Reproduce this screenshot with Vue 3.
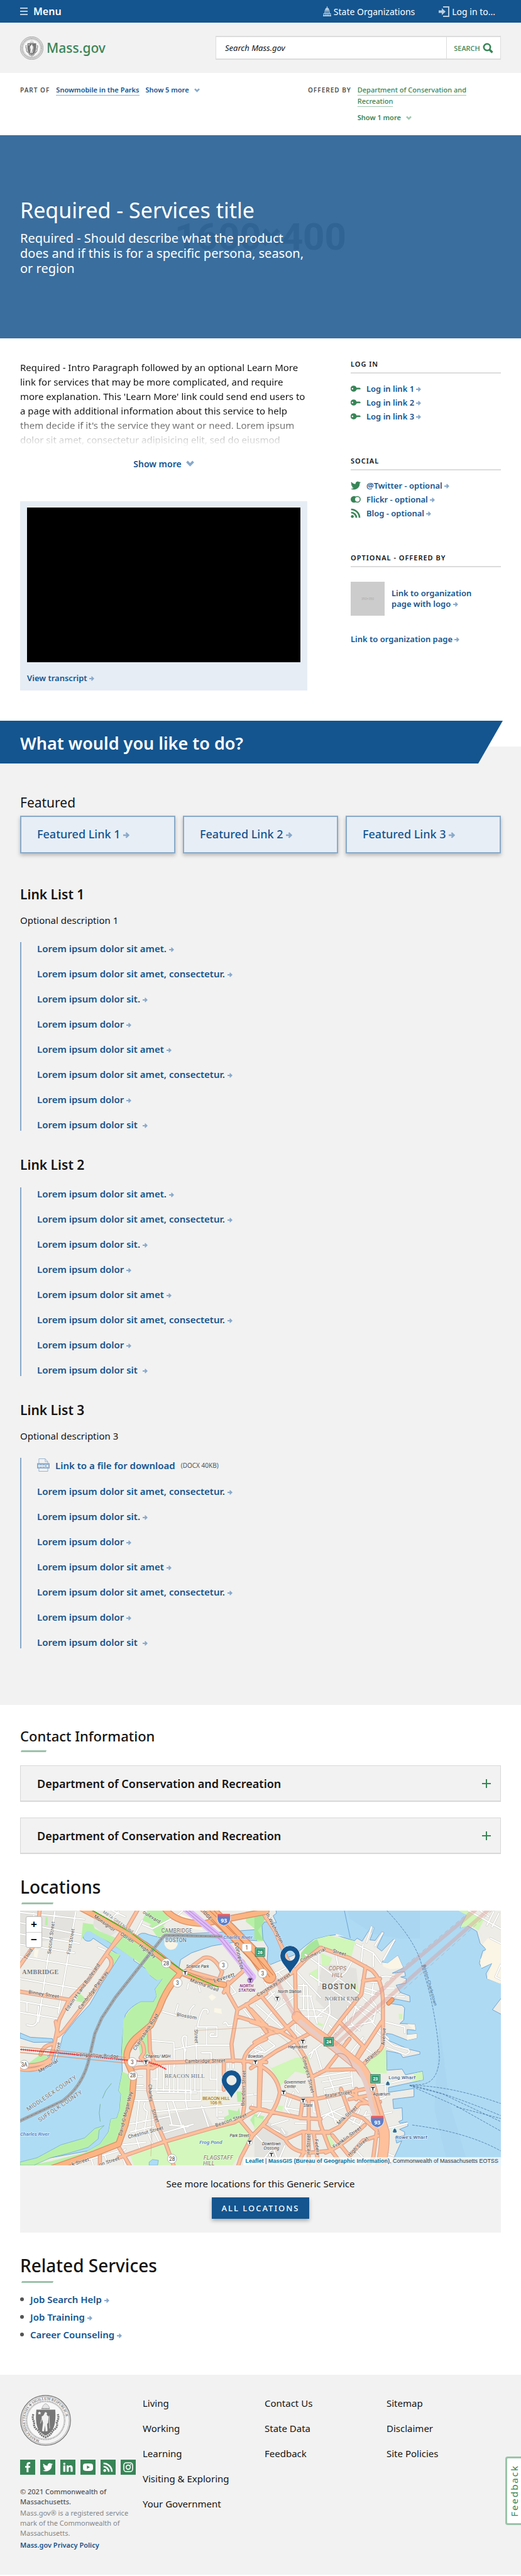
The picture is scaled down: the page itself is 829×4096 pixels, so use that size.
<script setup>
const plain = [
  'Lorem ipsum dolor sit amet.',
  'Lorem ipsum dolor sit amet, consectetur.',
  'Lorem ipsum dolor sit.',
  'Lorem ipsum dolor',
  'Lorem ipsum dolor sit amet',
  'Lorem ipsum dolor sit amet, consectetur.',
  'Lorem ipsum dolor',
  'Lorem ipsum dolor sit\u00a0',
]
const lists = [
  { title: 'Link List 1', text: 'Optional description 1', links: plain },
  { title: 'Link List 2', links: plain },
  { title: 'Link List 3', text: 'Optional description 3', file: true, links: plain.slice(1) },
]
const featured = ['Featured Link 1', 'Featured Link 2', 'Featured Link 3']
const logins = ['Log in link 1', 'Log in link 2', 'Log in link 3']
const socials = [
  { icon: 'twitter', text: '@Twitter - optional' },
  { icon: 'flickr', text: 'Flickr - optional' },
  { icon: 'rss', text: 'Blog - optional' },
]
const footerSocial = ['facebook', 'twitter', 'linkedin', 'youtube', 'rss', 'instagram']
const related = ['Job Search Help', 'Job Training', 'Career Counseling']
const footerNav = [
  ['Living', 'Working', 'Learning', 'Visiting & Exploring', 'Your Government'],
  ['Contact Us', 'State Data', 'Feedback'],
  ['Sitemap', 'Disclaimer', 'Site Policies'],
]

// Map geometry is drawn in a group stretched by KY; labels use the same factor on y only.
const KY = 1.0136
const Y = (v) => Math.round(v * KY)
const turn = (l) => `rotate(${l[3]} ${l[1]} ${Y(l[2])})`

// text, x, y, angle, class
const labels = [
  ['Monsignor', 612, 125, 36, 'st'],
  ['Obrien', 745, 210, 34, 'st'],
  ['Highway', 865, 287, 37, 'st'],
  ['MBTA GREEN LINE', 695, 118, 35, 'gl'],
  ['oulevard', 890, 90, 32, 'st'],
  ['Second Street', 312, 203, -83, 'st'],
  ['First Street', 428, 225, -80, 'st'],
  ['Third', 178, 302, -60, 'st'],
  ['Edwin H Land Boulevard', 495, 495, -55, 'st'],
  ['Cambridge Parkway', 558, 512, -53, 'st'],
  ['Binney Street', 258, 540, 9, 'st'],
  ['Memorial', 290, 955, -30, 'st'],
  ['Drive', 352, 845, -82, 'st'],
  ['Longfellow Bridge', 576, 895, 3, 'st'],
  ['Charlesbank Road', 868, 755, -57, 'st'],
  ['Martha Road', 1202, 485, 20, 'st'],
  ['Leverett', 1325, 445, -17, 'big'],
  ['Connector', 1400, 312, 77, 'big'],
  ['IDGE', 1215, 78, 48, 'st'],
  ['Blossom', 1100, 667, 10, 'st'],
  ['Street', 1148, 775, 88, 'st'],
  ['Cambridge Street', 1210, 927, -1, 'st'],
  ['Bowdoin Street', 1445, 1075, -88, 'st'],
  ['Beacon Street', 1365, 1270, -19, 'st'],
  ['Charles', 878, 1105, 87, 'st'],
  ['Street', 908, 1240, 70, 'st'],
  ['Chestnut Street', 862, 1342, -15, 'st'],
  ['David G Mugar Way', 750, 1225, -76, 'st'],
  ['k Street', 478, 1512, -17, 'st'],
  ['on Street', 648, 1510, -18, 'st'],
  ['MIDDLESEX COUNTY', 312, 1115, -34, 'cty'],
  ['SUFFOLK COUNTY', 362, 1190, -34, 'cty'],
  ['CAMBRIDGE', 1043, 173, 0, 'city'],
  ['BOSTON', 1038, 228, 0, 'city'],
  ['AMBRIDGE', 240, 412, 0, 'serif'],
  ['BEACON HILL', 1090, 1016, 0, 'serif2'],
  ['Charles River', 1403, 208, 0, 'wat'],
  ['Charles River', 206, 1354, 0, 'wat'],
  ['Frog Pond', 1243, 1398, 0, 'wat'],
  ['Science Park', 1165, 378, 0, 'stn'],
  ['Charles/ MGH', 932, 898, 0, 'stn'],
  ['Bowdoin', 1507, 898, 0, 'stn'],
  ['Park Street', 1412, 1360, 0, 'stn'],
  ['NORTH', 1454, 490, 0, 'ns'],
  ['STATION', 1455, 517, 0, 'ns'],
  ['BEACON HILL', 1275, 1143, 0, 'peak'],
  ['106 ft.', 1275, 1171, 0, 'peak'],
  ['FLAGSTAFF', 1288, 1492, 0, 'hill'],
  ['HILL', 1232, 1524, 0, 'hill'],
  ['th Washington', 1610, 150, 63, 'st'],
  ['Commercial', 1850, 310, -27, 'st'],
  ['Street', 1998, 298, 17, 'st'],
  ['Causeway Street', 1618, 483, -33, 'st'],
  ['COPPS', 1990, 392, 0, 'hill'],
  ['HILL', 1990, 433, 0, 'hill'],
  ['BOSTON', 2000, 502, 0, 'boston'],
  ['NORTH END', 2016, 566, 0, 'serif2'],
  ['North Station', 1708, 525, 0, 'stn'],
  ['Haymarket', 1755, 845, 0, 'stn'],
  ['Government', 1738, 1050, 0, 'stn'],
  ['Center', 1710, 1073, 0, 'stn'],
  ['State', 1816, 1185, 0, 'stn'],
  ['Aquarium', 2249, 1120, 0, 'stn'],
  ['Downtown', 1600, 1407, 0, 'stn'],
  ['Crossing', 1600, 1434, 0, 'stn'],
  ['Congress Street', 1808, 1000, 76, 'st'],
  ['State Street', 1996, 1120, -9, 'st'],
  ['Milk Street', 2052, 1240, -42, 'st'],
  ['Franklin Street', 2052, 1368, -36, 'st'],
  ['High Street', 2118, 1422, -43, 'st'],
  ['Federa', 1860, 1420, 83, 'st'],
  ['ire Street', 1828, 1400, -89, 'st'],
  ['Atlantic', 2200, 895, -40, 'st'],
  ['Avenue', 2270, 775, -86, 'st'],
  ['Long Wharf', 2370, 1023, 0, 'whf'],
  ["Rowe's Wharf", 2425, 1369, 0, 'whf'],
  ['Boston-Charlestown', 2525, 480, 74, 'ferry'],
]
const shields = [
  ['28', 981, 350], ['3', 1047, 464], ['3', 1317, 362], ['3', 1548, 408],
  ['3', 780, 924], ['28', 784, 1003], ['28', 1015, 1486], ['3A', 144, 940],
]
const stations = [
  [1092, 405], [861, 924], [1506, 924], [1472, 1390], [1635, 555],
  [1785, 805], [1672, 1100], [1787, 1147], [2198, 1079], [1600, 1462],
]
const exits = [['26', 1533, 286], ['24', 1938, 806], ['23', 2213, 1021]]
const interstates = [[1320, 98], [2224, 1270]]
const pins = [[1365, 1030], [1710, 307]]
</script>

<template>
  <div class="page">
    <svg class="defs" aria-hidden="true">
      <symbol id="arrow" viewBox="0 0 10 10">
        <path d="M0 5H8M4.4 1.2L8.4 5L4.4 8.8" fill="none" stroke="#88a9ca" stroke-width="2.4" />
      </symbol>
      <symbol id="chevron" viewBox="0 0 10 8">
        <path d="M1 1.5L5 5.6L9 1.5" fill="none" stroke="currentColor" stroke-width="3" />
      </symbol>
      <symbol id="key" viewBox="0 0 20 12">
        <path fill="currentColor" fill-rule="evenodd" d="M6 0a6 6 0 0 1 5.500 4H18l2 2-1.500 2-1-1-1.500 1-1.500-1L13 8H11.500A6 6 0 1 1 6 0zM3.500 4.500a1.600 1.600 0 1 0 .1 0z" />
      </symbol>
      <symbol id="twitter" viewBox="0 0 24 24">
        <path fill="currentColor" d="M24 4.600a10 10 0 0 1-2.800.8 5 5 0 0 0 2.100-2.700 10 10 0 0 1-3.100 1.200 4.900 4.900 0 0 0-8.400 4.500A14 14 0 0 1 1.700 3.200a4.900 4.900 0 0 0 1.500 6.500 5 5 0 0 1-2.200-.6 4.900 4.900 0 0 0 3.900 4.900 5 5 0 0 1-2.200.1 4.900 4.900 0 0 0 4.600 3.400A9.900 9.900 0 0 1 0 19.500a14 14 0 0 0 21.500-12.400A10 10 0 0 0 24 4.600z" />
      </symbol>
      <symbol id="flickr" viewBox="0 0 24 20">
        <circle cx="8" cy="10" r="8" fill="currentColor" />
        <circle cx="16" cy="10" r="6.700" fill="#fff" stroke="currentColor" stroke-width="2.400" />
      </symbol>
      <symbol id="rss" viewBox="0 0 24 24">
        <circle cx="4" cy="20" r="3.400" fill="currentColor" />
        <path d="M1 10.500A12.500 12.500 0 0 1 13.500 23M1 3A20 20 0 0 1 21 23" fill="none" stroke="currentColor" stroke-width="4" />
      </symbol>
      <symbol id="facebook" viewBox="0 0 24 24">
        <path fill="currentColor" d="M9.500 24V13H6V9h3.500V5.800C9.500 2 11.500 0 15 0h3.200v4h-2.300c-1.500 0-1.900.7-1.900 2v3h4.200l-.6 4H14v11z" />
      </symbol>
      <symbol id="linkedin" viewBox="0 0 24 24">
        <path fill="currentColor" d="M1 8h5v15H1zM3.500 1a2.700 2.700 0 1 1 0 5.400 2.700 2.700 0 0 1 0-5.400zM9 8h4.700v2.100C14.500 8.600 16.200 7.600 18 7.600c4.200 0 5.500 2.500 5.500 6.700V23h-5v-7.800c0-2-.3-3.400-2.100-3.400s-2.400 1.400-2.400 3.300V23H9z" />
      </symbol>
      <symbol id="youtube" viewBox="0 0 24 24">
        <path fill="currentColor" fill-rule="evenodd" d="M5 3.500Q12 2.500 19 3.500Q24 4 24 9v6q0 5-5 5.500-7 1-14 0-5-.5-5-5.500V9q0-5 5-5.500zM9.500 8v8l7-4z" />
      </symbol>
      <symbol id="instagram" viewBox="0 0 24 24">
        <rect x="1.500" y="1.500" width="21" height="21" rx="6" fill="none" stroke="currentColor" stroke-width="2.400" />
        <circle cx="12" cy="12" r="5" fill="none" stroke="currentColor" stroke-width="2.400" />
        <circle cx="18" cy="6" r="1.500" fill="currentColor" />
      </symbol>
      <symbol id="seal" viewBox="0 0 100 100">
        <circle cx="50" cy="50" r="49" fill="#f4f4f4" stroke="#777" stroke-width="1.600" />
        <circle cx="50" cy="50" r="46.500" fill="none" stroke="#888" stroke-width=".8" />
        <circle cx="50" cy="50" r="38" fill="#f8f8f8" stroke="#8a8a8a" stroke-width="1.400" stroke-dasharray="1 .7" />
        <circle cx="50" cy="50" r="36.500" fill="none" stroke="#999" stroke-width=".7" />
        <path d="M26 38Q23 46 28 54Q25 64 36 70Q40 80 50 83Q60 80 64 70Q75 64 72 54Q77 46 74 38" fill="none" stroke="#777" stroke-width="4" stroke-dasharray="3 1.200" />
        <path d="M32 29H69Q71 56 64 68Q58 77 50 80Q42 77 36 68Q29 56 32 29z" fill="#777" />
        <path d="M43 27Q44 20 50 17Q57 20 58 27z" fill="#e6e6e6" stroke="#999" stroke-width=".8" />
        <path d="M42 27H58" stroke="#777" stroke-width="1.500" stroke-dasharray="2 1" />
        <path d="M38 32l1 2.500h2.600l-2 1.700.7 2.500-2.300-1.500-2.300 1.500.7-2.500-2-1.700H37z" fill="#fff" />
        <path d="M49 34a3 3 0 0 1 3 5l4 4-1 12-2 2 1 14-4 1-1-12-2 12-4-1 2-16-3-12 4-3z" fill="#f1f1f1" />
        <path d="M43 46L40 56M57 41L58 66" stroke="#eee" stroke-width="1" />
      </symbol>
    </svg>

    <div class="topbar">
      <button class="menu" type="button">
        <svg width="12" height="12" viewBox="0 0 12 12" aria-hidden="true"><path d="M0 1H12M0 6H12M0 11H12" stroke="#b9cde0" stroke-width="2" /></svg>
        <span>Menu</span>
      </button>
      <nav class="utility">
        <a href="#orgs">
          <svg width="13" height="16" viewBox="0 0 26 32" aria-hidden="true">
            <path fill="#b9cde0" d="M12 0h2v4q5 2 6 8H6q1-6 6-8zM5 13h16v3H5zM5 17h3v5H5zM10 17h2v5h-2zM14 17h2v5h-2zM18 17h3v5h-3zM1 22h24v2H1zM1 25h3v4H1zM6 25h3v4H6zM11 25h4v4h-4zM17 25h3v4h-3zM22 25h3v4h-3zM0 29h26v3H0z" />
          </svg>
          <span>State Organizations</span>
        </a>
        <a href="#login">
          <svg width="17" height="17" viewBox="0 0 17 17" aria-hidden="true">
            <path d="M7 1H16V16H7" fill="none" stroke="#b9cde0" stroke-width="2" />
            <path d="M0 6.500H5V3L11 8.500L5 14V10.500H0z" fill="#b9cde0" />
          </svg>
          <span>Log in to...</span>
        </a>
      </nav>
    </div>

    <header class="header">
      <a class="logo" href="#home">
        <svg width="37" height="37" viewBox="0 0 100 100" aria-hidden="true">
          <use href="#seal" width="100" height="100" />
          <circle cx="50" cy="50" r="42" fill="none" stroke="#999" stroke-width="5" stroke-dasharray="3 2" />
        </svg>
        <span>Mass.gov</span>
      </a>
      <form class="search" @submit.prevent>
        <input type="text" placeholder="Search Mass.gov" aria-label="Search Mass.gov">
        <button type="submit">SEARCH
          <svg width="17" height="17" viewBox="0 0 17 17" aria-hidden="true"><circle cx="7" cy="7" r="5.200" fill="none" stroke="#388557" stroke-width="2.600" /><path d="M10.500 10.500L15.500 15.500" stroke="#388557" stroke-width="3.400" /></svg>
        </button>
      </form>
    </header>

    <div class="relations">
      <div class="part">
        <span class="tag">PART OF</span>
        <a class="ul" href="#snow">Snowmobile in the Parks</a>
        <button type="button">Show 5 more <svg width="9" height="7"><use href="#chevron" /></svg></button>
      </div>
      <div class="offered">
        <span class="tag">OFFERED BY</span>
        <div>
          <a class="ul" href="#dcr">Department of Conservation and Recreation</a>
          <button type="button">Show 1 more <svg width="9" height="7"><use href="#chevron" /></svg></button>
        </div>
      </div>
    </div>

    <section class="hero">
      <span class="holder" aria-hidden="true">1600×400</span>
      <div class="herotext">
        <h1>Required - Services title</h1>
        <p>Required - Should describe what the product does and if this is for a specific persona, season, or region</p>
      </div>
    </section>

    <main class="intro">
      <div>
        <p class="lead">Required - Intro Paragraph followed by an optional Learn More link for services that may be more complicated, and require more explanation. This 'Learn More' link could send end users to a page with additional information about this service to help them decide if it's the service they want or need. Lorem ipsum dolor sit amet, consectetur adipisicing elit, sed do eiusmod</p>
        <button class="more" type="button">Show more <svg width="13" height="10"><use href="#chevron" /></svg></button>
        <div class="videocard">
          <div class="video"></div>
          <a class="lnk" href="#transcript">View transcript <svg class="arr"><use href="#arrow" /></svg></a>
        </div>
      </div>
      <aside>
        <section class="side">
          <h2>LOG IN</h2>
          <ul>
            <li v-for="l in logins" :key="l"><svg class="ic key"><use href="#key" /></svg><a class="lnk" href="#l">{{ l }} <svg class="arr"><use href="#arrow" /></svg></a></li>
          </ul>
        </section>
        <section class="side">
          <h2>SOCIAL</h2>
          <ul>
            <li v-for="s in socials" :key="s.icon"><svg class="ic"><use :href="'#' + s.icon" /></svg><a class="lnk" href="#s">{{ s.text }} <svg class="arr"><use href="#arrow" /></svg></a></li>
          </ul>
        </section>
        <section class="side">
          <h2>OPTIONAL - OFFERED BY</h2>
          <div class="org">
            <span class="orglogo">350×350</span>
            <a class="lnk" href="#o">Link to organization page with logo <svg class="arr"><use href="#arrow" /></svg></a>
          </div>
          <a class="lnk orgpage" href="#p">Link to organization page <svg class="arr"><use href="#arrow" /></svg></a>
        </section>
      </aside>
    </main>

    <section class="actions">
      <h2 class="banner">What would you like to do?</h2>
      <div class="body">
        <h3 class="light">Featured</h3>
        <div class="cards">
          <a v-for="f in featured" :key="f" href="#f">{{ f }} <svg class="arr wide"><use href="#arrow" /></svg></a>
        </div>
        <div v-for="g in lists" :key="g.title" class="group">
          <h3>{{ g.title }}</h3>
          <p v-if="g.text">{{ g.text }}</p>
          <ul>
            <li v-if="g.file" class="file">
              <svg width="20" height="21" viewBox="0 0 24 25" aria-hidden="true">
                <path d="M3.500 .5H15.500L20.500 6V24.500H3.500zM15.500 .5V6H20.500" fill="#f2f2f2" stroke="#88a9ca" />
                <rect y="9" width="24" height="10" fill="#88a9ca" />
                <text x="12" y="17" text-anchor="middle" class="docx">DOCX</text>
              </svg>
              <a href="#d">Link to a file for download</a> <small>(DOCX 40KB)</small>
            </li>
            <li v-for="(t, i) in g.links" :key="i"><a href="#i">{{ t }} <svg class="arr"><use href="#arrow" /></svg></a></li>
          </ul>
        </div>
      </div>
    </section>

    <section class="lower">
      <h2 class="h22">Contact Information</h2>
      <div class="bar short"></div>
      <button v-for="n in 2" :key="n" class="accordion" type="button">
        <span>Department of Conservation and Recreation</span>
        <svg width="14" height="14" viewBox="0 0 14 14" aria-hidden="true"><path d="M7 0V14M0 7H14" stroke="#388557" stroke-width="2" /></svg>
      </button>

      <h2 class="h26">Locations</h2>
      <div class="bar"></div>
      <div class="mapwrap">
        <svg class="map" viewBox="120 45 2832 1500" preserveAspectRatio="xMidYMid slice" role="img" aria-label="Map of locations in Boston">
          <g :transform="`scale(1 ${KY})`">
            <rect x="120" y="40" width="2832" height="1490" fill="#edece6" />
            <g fill="#e3e2de">
              <path d="M120 44H440L420 200L120 240z" /><path d="M560 60L720 150L640 200L550 130z" />
              <path d="M1900 350L2100 380L2120 560L2000 700L1860 560z" /><path d="M1500 1230L1700 1330L1650 1524H1500z" />
              <path d="M900 1240L1200 1190L1260 1300L980 1370z" />
            </g>
            <g fill="#aedcf5" stroke="#5a96cc" stroke-width="3">
              <path d="M490 185A32 32 0 0 1 550 165L640 225L790 320V335L895 405L885 420L925 450L955 410L960 440L915 500L925 540L905 575L830 575Q770 600 740 650Q728 700 718 860L722 980L700 1090L714 1110L706 1200L690 1250L655 1255L640 1330L590 1400L520 1440L400 1462L300 1480L100 1540V975L200 945L330 925L350 860L370 775L450 675L530 590L600 470L650 395L708 305L640 265L550 205A32 32 0 0 1 490 185z" />
              <path d="M120 755L180 780L310 788L330 870L320 925L160 970L220 940L320 860V808L200 810L120 785z" />
              <path d="M805 200Q830 160 880 185L960 205L985 170L1080 180L1300 170L1510 155L1515 220L1460 215L1250 250L1130 290L1065 330L1055 380L985 320L870 230z" />
            </g>
            <path d="M970 205L1050 235Q1040 275 1005 272Q980 268 970 240z" fill="#f8f4e4" />
            <g fill="#b9f0a8">
              <path d="M490 115L550 125L560 150L600 170L690 205L740 165L860 250L1040 400L1010 470L925 545L915 500L960 440L925 450L885 420L850 370L790 325L640 225L550 175Q510 140 490 200L480 220z" />
              <path d="M710 300L650 390Q665 340 630 300L650 280z" />
              <path d="M1040 400L980 480L930 620L890 710L790 790L745 870L718 900L728 680Q770 600 830 575H905L925 540z" />
              <path d="M722 980L790 1010L780 1120L740 1290L700 1390L560 1450L330 1524H180L300 1500L500 1450L590 1400L640 1330L655 1255L690 1250L706 1200L714 1110L700 1090z" />
              <path d="M120 1505L220 1480L360 1405L500 1365L560 1310L615 1293L585 1320L580 1370L520 1420L400 1455L300 1480L200 1524H120z" stroke="#5a96cc" stroke-width="2" />
              <path d="M870 44H970L1000 90L950 150L840 100z" /><path d="M880 130L930 110L1010 170L930 200z" />
              <path d="M170 930L240 880L290 895L280 910L200 935z" /><path d="M270 80h12v50h-15z" />
              <path d="M465 520L510 560L490 580L450 570z" /><path d="M810 780L870 740L880 880L830 900z" />
              <path d="M1310 1250L1350 1230L1345 1200L1400 1210L1410 1190L1420 1240L1340 1270z" />
              <path d="M1475 1260L1500 1225L1560 1240L1515 1325z" /><path d="M1395 1095h30v60h-25z" />
              <path d="M1450 50L1500 44H1560V220L1515 225L1510 155L1450 110z" /><path d="M655 1290a30 30 0 0 1 60 0z" opacity=".5" />
            </g>
            <g fill="#d4f7bd">
              <path d="M770 1470L960 1400L1430 1265L1490 1350L1370 1524H790z" />
            </g>
            <path d="M880 1524V1505L900 1490L935 1495L930 1524z" fill="#aedcf5" stroke="#5a96cc" stroke-width="2" />
            <g stroke="#6fae7c" stroke-width="3" fill="none"><path d="M658 1048L625 1090L605 1135M592 1168L586 1220L592 1270" /></g>
            <g fill="#fbf7e9"><path d="M1230 545L1250 530L1275 548L1250 570z" /><path d="M1265 610L1305 615L1308 645L1262 635z" /><path d="M205 270L230 270L220 320L200 310z" /><path d="M1060 60L1150 100L1200 160L1130 150L1050 90z" /></g>

            <g transform="translate(1500)">
              <path fill="#aedaf4" stroke="#5a96cc" stroke-width="3" d="M125 30L130 60L110 75L130 115L60 110L45 130L50 210L80 260L75 340L95 358L140 340L240 300L300 250L350 212L440 190L480 185L520 200L590 220L605 205L635 222L690 135L708 145L680 215L712 218L750 165L765 172L722 258L750 280L820 210L830 220L752 345L785 350L845 305L878 378L812 408L885 400L890 425L862 430L895 440L893 465L835 478L860 520L915 540L917 575L815 555L775 580L870 595L885 610L880 680L857 700L945 705L950 740L900 735L900 765L958 760L957 785L900 797L810 762L778 758L780 795L910 850L975 865L975 878L875 898L860 875L778 858L780 972L870 965L890 998L990 978L995 1028L790 1072L790 1100L940 1078L940 1125L815 1140L820 1195L870 1190L873 1260L850 1270L858 1280L900 1272L905 1295L855 1315L885 1330V1350L830 1360L838 1395L868 1382L795 1540H1460V650L1402 620L1460 545V470L1370 440L1365 410L1400 350L1340 380L1325 350L1345 280L1365 270L1330 235L1310 165L1250 130L1212 145L1250 70L1200 30z" />
              <path d="M550 44H975V205L860 208L700 180L560 90zM1090 700L1150 1160L1260 1524H1140L1060 1200z" fill="#a6d4ef" opacity=".6" />
              <g fill="#fbf5e6">
                <path d="M752 345L785 350L845 305L878 378L800 385L760 370z" /><path d="M902 703L945 705L950 740L930 730zM900 765L958 760L957 785L900 797z" />
                <path d="M1390 200L1451 230V470L1370 440L1400 350L1335 378L1330 330L1365 270L1345 240L1370 210z" /><path d="M480 180L530 195L480 190z" />
              </g>
              <g fill="#d0f6b8">
                <path d="M350 212L440 190L595 222L570 320L480 290L385 260z" /><path d="M390 290L460 320L440 360L400 370z" /><path d="M320 410L375 380L370 460z" />
                <path d="M775 840L780 990L690 985L655 950L690 890z" /><path d="M75 930L100 960L240 900L320 890L330 1000L240 980L150 1065L130 1010z" />
                <path d="M940 990L990 980L994 1028L930 1035z" /><path d="M1200 44H1260L1350 100L1320 160L1270 130L1212 145L1250 70z" />
                <path d="M400 1300L440 1345L480 1410L430 1420z" /><path d="M0 1240L60 1260L0 1330z" /><path d="M850 645h22v30h-20z" /><path d="M560 470l30-10 30 60-20 10z" /><path d="M135 1175l35 5-5 30-30-10z" /><path d="M370 690l35 15-5 15-32-15z" />
              </g>
              <path d="M275 290Q330 220 370 212L385 250L270 350z" fill="#a5e69b" />
              <path d="M0 44H40L65 80L45 130L20 160L55 220L0 210z" fill="#a5e69b" />
              <path d="M530 44L565 205" stroke="#5a96cc" fill="none" stroke-width="3" />
            </g>

            <g fill="none" stroke-linejoin="round" stroke-linecap="round">
              <g v-for="p in [['#c9c8c4', 12], ['#ffffff', 8]]" :key="p[1]" :stroke="p[0]" :stroke-width="p[1]">
                <path d="M120 55L500 95M120 115L480 185M120 180L470 235M120 240L440 290M120 312L540 380M120 440L460 498M120 570L355 610M120 635L340 672M325 50L228 690M448 50L345 640M228 600L220 690Q205 725 160 708M160 580V630M200 60V230M660 44L740 80M700 50L670 80M840 100L790 195M840 125L900 150L1015 90M580 258L620 275M1080 44L1050 70" />
                <path d="M960 632L1080 665M1050 590L1035 640M1145 595Q1115 620 1115 650M1225 640Q1235 612 1200 618Q1180 640 1165 720H1280V775H1240Q1235 755 1260 760M1155 720L1160 920M895 800L1025 810L1030 950M1030 850L1155 827L1358 827M1218 720V820M1090 920V860L1075 800Q1075 765 1100 775L1095 860M1190 870H1245V915M1105 500Q1115 450 1110 480M1170 480L1180 515M1320 700Q1330 680 1345 715L1370 710M1360 480L1390 520L1350 540M1430 610L1495 690M1480 830L1530 890M1510 810L1560 860M1475 870L1540 810" />
                <path d="M790 1082L1315 1094M925 1100L1160 1103M780 1147L1185 1147M895 1213L1420 1170M760 1285L1000 1240M770 1330L905 1298M800 1355L830 1440M960 1337L1140 1285M1000 1290L1110 1300M725 1405L860 1390M740 1430L700 1470M928 930L925 1090M965 960V1090M985 930V1060M1000 930V1100M1025 940V1100M1050 1000V1100M1095 940V1140M1125 1020V1140M1150 940V1090M1185 940V1140M1240 940V1025H1280M1280 940V1240M1345 930V960M1375 930V960M820 1150L800 1330M855 1160Q840 1200 870 1210L850 1330M985 1160L1015 1290M1020 1150L1070 1290M1095 1150L1105 1200M1190 1180L1230 1300M870 1330L900 1400M910 1330L940 1390M1080 1290L1100 1345M800 1060H845M810 1008H840M900 1022H930M1290 1215H1310M1290 1250H1320M1490 1170V1200M1430 1120L1515 1110M420 1520L700 1440M620 1470L640 1524M540 1490L550 1524M720 1460L740 1524" />
              </g>
              <g v-for="p in [['#c9c8c4', 12], ['#ffffff', 8]]" :key="'e' + p[1]" transform="translate(1500)" :stroke="p[0]" :stroke-width="p[1]">
                <path d="M380 280V480M300 300L620 530M330 420L540 560M250 400L390 550M260 480H310L320 700M290 470V620M330 540L370 700M265 540H340M265 620H420M270 660H400M440 540L445 640L395 760M360 670L445 590M370 620L440 650M540 560L700 690M600 240L700 290L745 350M640 460H740M640 490L740 520M650 520L720 540M640 550L755 650M700 470L690 560L720 600L700 690L550 720M700 290V370M640 240L630 340M580 330L540 400L460 470M480 300L500 400M600 600L570 700L620 740M550 600L540 690M620 600L710 650M720 750L820 830L905 850Q925 870 890 880L780 840M760 690L885 720V755M760 540L885 545M760 495H825M745 430Q790 420 825 435M690 140L660 230M755 175L710 250M825 215L760 330M620 740L580 710M640 780L560 880M440 650L520 700M440 710L490 760M650 800L590 900M620 820L690 870M690 690L790 790" />
                <path d="M60 460L140 580L60 690M10 590L180 740M100 640L240 540M140 400L230 500M80 350L130 420M120 520L60 570M170 560L240 640M120 410L200 370M0 850L60 870L120 830L70 790L40 760M0 880L50 860M60 800L20 830M240 700V740L300 790M320 880L420 800M350 850L330 900M360 850L400 980M370 980H440M380 1010L560 980M400 1040L570 1010M410 1080L580 1045M440 1010L470 1090M570 960L580 1070M410 1090L480 1280M390 1240L540 1180M390 1260L460 1210L500 1230L620 1290M430 1230L510 1270L540 1240M350 1150V1215H390M200 1110L180 1190L230 1250M230 1100L200 1180M180 1190L270 1205M260 1100L230 1060M770 1060V1130L720 1145M700 1060L780 1050L940 1015M780 1310L900 1280M740 1230L810 1215M620 1200L580 1280M660 1210L620 1290M600 1250L690 1270M570 1250L680 1230M60 1290L150 1330M100 1290L200 1260M160 1310L180 1340M240 1280H310V1320M0 1340L60 1400M140 1390L60 1480M110 1420L140 1500M180 1410L130 1524M590 1430L640 1480M770 1450L820 1470M30 1150H110M20 1240L40 1210M0 1110H20" />
                <path d="M1260 44L1451 150M1330 44L1380 80M1370 130L1410 50M1400 140L1440 60M1390 205L1451 235M1451 360L1420 430L1451 445" />
              </g>
            </g>

            <g fill="none" stroke-linejoin="round" stroke-linecap="round">
              <g v-for="p in [['#dc9f8c', 24], ['#fdc09a', 15]]" :key="p[1]" :stroke="p[0]" :stroke-width="p[1]">
                <path d="M810 44L740 165L640 280L520 450L405 570L350 680L320 830L300 900Q260 950 100 945M720 165L625 305M625 300Q675 330 650 375L520 560L375 745L345 770L330 690M100 512L410 562M235 44L230 90M100 390L210 235M240 880Q260 820 320 820M120 965Q220 985 300 920M1060 415Q980 500 940 610M880 740L885 860L910 930M745 920Q740 880 800 800Q850 790 850 870L830 900L890 935M875 930V1090L930 1290L975 1390L1030 1540M860 930L1075 925L1380 915L1570 925M700 1480L960 1390L1240 1310L1380 1275L1530 1195L1570 1205M690 1400L775 1540M590 1455V1540M1320 480L1400 620L1365 820L1375 920M1400 620L1570 525M1400 660L1570 710M1450 590L1570 750M1320 925V1085M1440 930V1180L1430 1250M1345 520V460M1410 1255L1490 1350L1570 1270M1435 930Q1440 840 1570 790M1530 930L1525 1190M1490 1350L1420 1480L1400 1540M1095 395L1200 320Q1260 300 1310 400L1290 450M1110 395L1290 445M1320 520L1350 470L1430 400Q1450 360 1430 340M800 960Q840 950 900 960L950 930M1550 40L1570 90" />
                <g transform="translate(1500)">
                  <path d="M30 30L120 160L190 320L240 400L245 690M-20 570L230 400L300 330L390 260L560 320L690 390Q750 440 757 560V820Q750 860 680 900L610 970M655 370L630 530L500 690L440 770M640 452L740 440M-20 690L150 745L240 800L300 900L340 1010L360 1140L390 1290L440 1420L530 1540M-20 620L100 745M0 810L90 760L170 740L245 680M40 540L240 780M-20 960L130 860L340 750M40 930L30 1200M-20 925Q130 970 150 1100Q130 1220 -20 1360M150 1100L270 1140L380 1135L680 1075M390 1330H440L500 1300L620 1165L740 1155M420 1450Q520 1410 650 1290M560 1470L640 1380L770 1340M340 1010L420 970L620 965M420 970L490 880L560 790M500 690L640 830L600 900M750 690L590 930M-20 1190L280 1250L390 1255M50 1290L180 1370Q220 1450 330 1450L440 1440M320 1140V1540M285 1140L270 1250M190 1370L280 1330L440 1335M250 620L340 750M600 960L690 1080M510 1080L560 1220L640 1250L720 1320M560 1100L700 1180M600 1080V1140M290 1330V1450L240 1540M350 1340L380 1540M560 1140L690 1115M720 1330L700 1480L660 1540M460 1350L560 1470M150 745Q110 760 90 745" />
                </g>
              </g>
              <g v-for="p in [['#dc9068', 38], ['#fbb583', 28]]" :key="'w' + p[1]" :stroke="p[0]" :stroke-width="p[1]">
                <path d="M480 30L740 165L880 260L1060 400L1200 455L1320 475M1055 420Q980 500 940 610L890 710L800 785Q735 850 750 920L790 1010L780 1120L740 1290L700 1400L560 1455L310 1540M970 30Q1040 120 1200 120L1570 50" />
              </g>
              <g v-for="p in [['#dc9068', 78], ['#fbb583', 66]]" :key="'i' + p[1]" :stroke="p[0]" :stroke-width="p[1]"><path d="M1210 20L1350 150L1500 300L1590 430" /></g>
              <path d="M1210 20L1350 150L1500 300L1590 430M1190 30L1570 430M1240 20L1610 420" stroke="#d87f4e" stroke-width="4" />
              <g transform="translate(1500)">
                <path d="M250 660L340 740L470 830L620 950Q690 1030 710 1160L765 1330Q770 1430 740 1540" stroke="#dc9f8c" stroke-width="62" />
                <path d="M250 660L340 740L470 830L620 950Q690 1030 710 1160L765 1330Q770 1430 740 1540" stroke="#fdc09a" stroke-width="54" />
                <path d="M270 690L340 745L470 845L610 960Q665 1040 690 1180L730 1300" stroke="#e8cbc4" stroke-width="26" />
                <path d="M480 880Q540 850 580 960M700 1100L740 1230" stroke="#dc9f8c" stroke-width="5" />
                <path d="M440 810L830 430L1300 44M480 820L880 470L1390 30" stroke="#dd9c95" stroke-width="22" opacity=".42" />
                <path d="M440 795L820 420L1290 34M500 830L900 485L1410 34" stroke="#b9a29c" stroke-width="3" stroke-dasharray="22 20" opacity=".8" />
                <path d="M790 583L812 562" stroke="#dc7f4c" stroke-width="26" /><path d="M790 583L812 562" stroke="#f9a36c" stroke-width="18" />
                <path d="M130 450L230 640" stroke="#e2a79d" stroke-width="26" opacity=".5" />
              </g>
              <path d="M1090 30L1310 210L1490 430" stroke="#e0bbfb" stroke-width="40" />
              <path d="M1090 40L1300 215L1480 430M1110 40L1310 200L1490 420" stroke="#b58fd0" stroke-width="4" stroke-dasharray="6 3" />
              <path d="M110 1270L370 1150Q480 1070 520 930L560 760L600 670L680 550L960 200L975 188L1310 195" stroke="#8d9296" stroke-width="18" stroke-linecap="butt" />
              <path d="M110 1270L370 1150Q480 1070 520 930L560 760L600 670L680 550L960 200L975 188L1310 195" stroke="#adb3b7" stroke-width="13" stroke-linecap="butt" />
              <path d="M110 1270L370 1150Q480 1070 520 930L560 760L600 670L680 550L960 200L975 188L1310 195" stroke="#555" stroke-width="3" stroke-dasharray="12 6 3 6" />
              <path d="M540 40L760 165L980 325L1100 410L1290 490" stroke="#2cae10" stroke-width="4" /><path d="M540 40L760 165L980 325L1100 410L1290 490" stroke="#2cae10" stroke-width="9" stroke-dasharray="2 9" stroke-linecap="butt" />
              <path d="M115 850L420 878L740 912L860 922L930 940L980 966" stroke="#ee2020" stroke-width="4" /><path d="M115 850L420 878L740 912L860 922L930 940L980 966" stroke="#ee2020" stroke-width="12" stroke-dasharray="3 9" stroke-linecap="butt" />
              <path d="M115 835L740 897M115 868L740 930" stroke="#dc9068" stroke-width="5" opacity=".8" />
              <path d="M890 1470Q900 1300 890 1200M1170 740L1560 720M1560 720Q1740 800 1830 1000" stroke="#d39b77" stroke-width="2" />
              <g transform="translate(1500)" stroke="#4674a3" stroke-width="3" stroke-dasharray="14 6" stroke-linecap="butt">
                <path d="M780 44Q960 230 990 380Q1070 620 1090 900Q1080 1060 960 1055L915 1060M915 1060Q1150 1060 1451 1165M915 1060Q1100 1090 1451 1235M915 1060L1110 1110L1451 1270M915 1060L1190 1180L1451 1325M1190 1185L1451 1252M930 1290Q1250 1330 1451 1440" />
              </g>
            </g>
          </g>

          <g class="labels">
            <text v-for="(l, i) in labels" :key="i" :x="l[1]" :y="Y(l[2])" :class="l[4]" :transform="turn(l)" text-anchor="middle">{{ l[0] }}</text>
          </g>
          <g v-for="(s, i) in shields" :key="'s' + i">
            <circle :cx="s[1]" :cy="Y(s[2])" r="27" fill="#fff" stroke="#aaa" stroke-width="3" />
            <text :x="s[1]" :y="Y(s[2]) + 11" class="num" text-anchor="middle">{{ s[0] }}</text>
          </g>
          <rect x="1427" y="240" width="56" height="46" rx="10" fill="#fff" stroke="#bbb" stroke-width="3" />
          <text x="1455" y="275" class="num" text-anchor="middle">1</text>
          <g v-for="(s, i) in stations" :key="'t' + i">
            <circle :cx="s[0]" :cy="Y(s[1])" r="16" fill="#fff" stroke="#888" stroke-width="2" />
            <path :d="`M${s[0] - 10} ${Y(s[1]) - 7}h20M${s[0]} ${Y(s[1]) - 7}v18`" stroke="#111" stroke-width="5" />
          </g>
          <circle cx="1476" cy="455" r="17" fill="#c79be6" stroke="#8a5ca8" stroke-width="2" />
          <path d="M1466 448h20M1476 448v18" stroke="#222" stroke-width="5" />
          <g v-for="e in exits" :key="e[0]">
            <rect :x="e[1] - 28" :y="Y(e[2]) - 25" width="56" height="50" fill="#2f9a70" stroke="#1f7553" stroke-width="3" />
            <rect :x="e[1] - 24" :y="Y(e[2]) - 21" width="48" height="42" fill="none" stroke="#cfe9de" stroke-width="2" />
            <text :x="e[1]" :y="Y(e[2]) + 9" class="exit" text-anchor="middle">{{ e[0] }}</text>
          </g>
          <g v-for="(e, i) in interstates" :key="'n' + i" :transform="`translate(${e[0]} ${Y(e[1])})`">
            <path d="M-36 -33H36Q46 0 28 22Q14 32 0 36Q-14 32 -28 22Q-46 0 -36 -33z" fill="#5a80cc" stroke="#fff" stroke-width="3" />
            <path d="M-36 -34H36L38 -19H-38z" fill="#ee5a5a" />
            <text x="0" y="17" class="exit i" text-anchor="middle">93</text>
          </g>
          <g v-for="f in [[2286, 1048], [2327, 1322]]" :key="f[0]" :transform="`translate(${f[0]} ${Y(f[1])})`">
            <circle r="21" fill="#dff3f0" /><path d="M-12 2H12L9 11H-9zM-8 -6H8V1H-8zM-3 -12H3V-6H-3z" fill="#2f5b82" />
          </g>
          <g v-for="p in pins" :key="p[0]" :transform="`translate(${p[0]} ${Y(p[1])})`">
            <path fill="#14558f" fill-rule="evenodd" stroke="#fff" stroke-width="3" d="M0 108C-12 72 -59 42 -59 0A59 60 0 0 1 59 0C59 42 12 72 0 108zM0 -28A28 28 0 1 0 1 -28z" />
          </g>
        </svg>
        <div class="zoom"><button type="button" aria-label="Zoom in">+</button><button type="button" aria-label="Zoom out">−</button></div>
        <div class="credit"><a href="#leaflet">Leaflet</a> | <a href="#massgis">MassGIS (Bureau of Geographic Information)</a>, Commonwealth of Massachusetts EOTSS</div>
      </div>
      <div class="maplinks">
        <p>See more locations for this Generic Service</p>
        <a href="#all">ALL LOCATIONS</a>
      </div>

      <h2 class="h26">Related Services</h2>
      <div class="bar"></div>
      <ul class="related">
        <li v-for="r in related" :key="r"><a class="lnk" href="#r">{{ r }} <svg class="arr"><use href="#arrow" /></svg></a></li>
      </ul>
    </section>

    <footer class="footer">
      <div class="brand">
        <svg class="bigseal" viewBox="0 0 100 100" role="img" aria-label="Seal of the Commonwealth">
          <use href="#seal" width="100" height="100" />
          <path id="ring" d="M50 90.400A40.400 40.400 0 1 1 50.100 90.400" fill="none" />
          <text class="ringtext"><textPath href="#ring" startOffset="12">MASSACHUSETTENSIS ✢ SIGILLUM REIPUBLICÆ</textPath></text>
        </svg>
        <div class="icons"><a v-for="s in footerSocial" :key="s" href="#x" :aria-label="s"><svg width="16" height="16"><use :href="'#' + s" /></svg></a></div>
        <p class="copy">© 2021 Commonwealth of Massachusetts.</p>
        <p class="mark">Mass.gov® is a registered service mark of the Commonwealth of Massachusetts.</p>
        <a class="privacy" href="#privacy">Mass.gov Privacy Policy</a>
      </div>
      <ul v-for="(c, i) in footerNav" :key="i">
        <li v-for="n in c" :key="n"><a href="#n">{{ n }}</a></li>
      </ul>
      <button class="feedback" type="button">Feedback</button>
    </footer>
  </div>
</template>

<style>
body { margin: 0; }
</style>

<style scoped>
.page { font-family: "Noto Sans", "Open Sans", sans-serif; color: #141414; font-size: 15px; background: #fff; }
.page *, .page *::before { box-sizing: border-box; }
h1, h2, h3, p, ul { margin: 0; padding: 0; }
ul { list-style: none; }
a { text-decoration: none; color: inherit; }
button { font: inherit; color: inherit; background: none; border: 0; padding: 0; cursor: pointer; }
.defs { position: absolute; width: 0; height: 0; }
.ringtext { font: 700 7px "Liberation Serif", serif; fill: #777; }
.arr { width: 8px; height: 8px; }
.arr.wide { width: 10px; height: 10px; }

.topbar { height: 36px; padding: 0 41px 0 32px; background: #14558f; color: #fff; display: flex; align-items: center; justify-content: space-between; }
.menu { display: flex; align-items: center; gap: 9px; font-size: 16px; font-weight: 600; }
.utility { display: flex; gap: 38px; font-size: 14px; }
.utility a { display: flex; align-items: center; gap: 4px; }

.header { height: 80px; padding: 0 32px; background: #f2f2f2; display: flex; align-items: center; justify-content: space-between; }
.logo { display: flex; align-items: center; gap: 5px; font-size: 21px; font-weight: 500; color: #388557; }
.search { width: 454px; height: 38px; display: flex; border: 2px solid #dcdcdc; border-width: 2px 1px; background: #fff; }
.search input { flex: 1; min-width: 0; border: 0; padding: 0 14px; font: italic 13px "Noto Sans", sans-serif; outline: 0; background: none; }
.search input::placeholder { color: #141414; opacity: 1; }
.search button { width: 86px; border-left: 1px solid #dcdcdc; color: #388557; font-size: 11px; font-weight: 500; display: flex; align-items: center; justify-content: center; gap: 4px; }

.relations { height: 99px; padding: 18px 32px 0; display: flex; justify-content: space-between; font-size: 11px; line-height: 18px; }
.part { display: flex; gap: 10px; color: #14558f; height: 18px; }
.tag { color: #535353; font-size: 10px; font-weight: 600; letter-spacing: 1px; white-space: nowrap; }
.part .ul { border-bottom: 1px solid #8fb0d0; line-height: 16px; height: 17px; font-weight: 600; margin-top: 1px; }
.part button, .offered button { font-weight: 600; display: flex; align-items: center; gap: 8px; color: inherit; }
.part svg { color: #88a9ca; }
.offered { width: 307px; display: flex; gap: 10px; color: #388557; }
.offered .ul { text-decoration: underline; text-decoration-color: #9fc8b0; text-underline-offset: 4px; font-weight: 500; }
.offered button { margin-top: 8px; }
.offered svg { color: #9fc8b0; }

.hero { height: 323px; background: #3a6e9e; position: relative; display: flex; align-items: center; justify-content: center; }
.holder { font: 700 60px "Roboto", sans-serif; color: #306494; }
.herotext { position: absolute; left: 32px; top: 94px; width: 462px; color: #fff; }
.herotext h1 { font-size: 34px; font-weight: 400; line-height: 50px; }
.herotext p { font-size: 20px; line-height: 24px; margin-top: 8px; }

.intro { padding: 0 32px 48px; display: grid; grid-template-columns: 457fr 239fr; column-gap: 69px; }
.lead { margin-top: 35px; font-size: 15px; line-height: 23px; -webkit-mask: linear-gradient(#000 82px, transparent 138px); mask: linear-gradient(#000 82px, transparent 138px); }
.more { display: flex; margin: 14px auto 48px; align-items: center; gap: 7px; height: 24px; font-size: 14px; font-weight: 600; color: #14558f; }
.more svg { color: #88a9ca; }
.videocard { background: #e7edf5; padding: 10px 11px 8px; }
.video { background: #000; height: 246px; margin-bottom: 13px; }
.lnk { color: #14558f; font-weight: 600; font-size: 13px; }
.videocard .lnk { display: block; line-height: 24px; }
.side { padding-bottom: 52px; }
aside { padding-top: 33px; }
.side h2 { font-size: 11px; font-weight: 600; letter-spacing: 1px; line-height: 16px; padding-bottom: 5px; border-bottom: 2px solid #dcdcdc; }
.side ul { margin-top: 13px; }
.side li { display: flex; align-items: center; height: 22px; gap: 9px; }
.ic { width: 16px; height: 16px; color: #388557; }
.ic.key { height: 10px; }
.org { display: flex; align-items: center; gap: 11px; margin: 23px 0 26px; }
.orglogo { width: 54px; height: 54px; background: #ccc; color: #aaa; font-size: 5px; display: flex; align-items: center; justify-content: center; flex: none; }
.org .lnk { line-height: 17px; width: 145px; }
.orgpage { line-height: 22px; display: block; }

.actions { background: linear-gradient(#fff 41px, #f2f2f2 41px); }
.banner { height: 68px; margin-right: 29px; padding-left: 32px; background: #14558f; color: #fff; font-size: 27px; font-weight: 600; line-height: 71px; clip-path: polygon(0 0, 100% 0, calc(100% - 39px) 100%, 0 100%); }
.body { padding: 49px 32px 90px; }
h3 { font-size: 21px; line-height: 26px; font-weight: 600; }
h3.light { font-weight: 400; }
.cards { margin: 8px 0 52px; display: grid; grid-template-columns: repeat(3, 1fr); gap: 12px; }
.cards a { height: 60px; line-height: 55px; padding-left: 25px; border: 2px solid #8aaac8; background: #e8eef6; color: #14558f; font-size: 18px; font-weight: 500; box-shadow: 0 3px 6px rgba(0, 0, 0, .25); }
.group p { margin-top: 16px; line-height: 24px; }
.group ul { margin: 23px 0 41px; padding-left: 25px; border-left: 2px solid #88a9ca; display: grid; gap: 20px; }
.group:last-child ul { margin-bottom: 0; }
.group li { line-height: 20px; color: #14558f; }
.group li a { font-weight: 600; }
.group .file { height: 23px; line-height: 22px; display: flex; align-items: center; gap: 9px; }
.file small { color: #535353; font-size: 10px; font-weight: 400; }
.docx { font: 800 7px "Open Sans", sans-serif; fill: #fff; }

.lower { padding: 36px 32px 50px; }
.h22 { font-size: 22px; line-height: 26px; font-weight: 500; }
.h26 { font-size: 28px; line-height: 32px; font-weight: 500; margin-top: 36px; }
.bar { width: 51px; height: 3px; margin: 9px 0 10px 2px; background: #9cc3aa; clip-path: polygon(1px 0, 100% 0, calc(100% - 1px) 100%, 0 100%); }
.bar.short { width: 41px; margin: 10px 0 21px 1px; }
.accordion { display: flex; width: 100%; height: 58px; padding: 0 15px 0 26px; margin-bottom: 25px; justify-content: space-between; align-items: center; border: 1px solid #d8d8d8; border-bottom-width: 2px; background: #f2f2f2; font-size: 18px; font-weight: 600; }
.accordion:nth-of-type(2) { margin-bottom: 0; }
.mapwrap { position: relative; }
.map { display: block; width: 100%; height: 405px; font-family: Roboto, sans-serif; }
.labels text { paint-order: stroke; stroke: rgba(255, 255, 255, .55); stroke-width: 5px; fill: #4d4d4d; font-size: 29px; letter-spacing: 1px; }
.labels .big { font-size: 34px; }
.labels .gl { font-size: 24px; fill: #777; }
.labels .cty { font-size: 35px; fill: #777; }
.labels .city { font-size: 31px; fill: #666; }
.labels .serif { font: 700 37px "Liberation Serif", serif; fill: #777; stroke-width: 3px; }
.labels .serif2 { font: 34px "Liberation Serif", serif; fill: #666; stroke-width: 3px; }
.labels .wat { font: italic 500 30px Roboto, sans-serif; fill: #5179c4; letter-spacing: 0; }
.labels .stn { font: italic 24px Roboto, sans-serif; fill: #333; letter-spacing: 0; }
.labels .ns { font: italic 500 25px Roboto, sans-serif; fill: #7c2a78; letter-spacing: 0; }
.labels .peak { font-size: 26px; fill: #8a5637; stroke: #f6efb8; letter-spacing: 0; }
.labels .hill { font: italic 32px Roboto, sans-serif; fill: #8c6a5c; }
.labels .boston { font-size: 46px; font-weight: 500; letter-spacing: 4px; fill: #595959; }
.labels .whf { font-size: 29px; font-weight: 500; fill: #3b6696; stroke: rgba(255, 255, 255, .8); }
.labels .ferry { font-size: 26px; fill: #4a6a8c; stroke: none; }
.num { font-size: 31px; fill: #444; }
.exit { font: 700 25px "Noto Sans", sans-serif; fill: #fff; }
.exit.i { font-size: 32px; }
.zoom { position: absolute; left: 9px; top: 9px; width: 32px; height: 62px; display: grid; grid-template-rows: 1fr 1fr; border: 1px solid #bbb; border-radius: 3px; background: #fff; color: #000; font: 700 17px "Liberation Sans", sans-serif; }
.zoom { width: 26px; height: 50px; }
.zoom button + button { border-top: 1px solid #ccc; }
.credit { position: absolute; right: 0; bottom: 0; height: 13px; padding: 0 4px; font: 9px/13px "Liberation Sans", sans-serif; color: #333; background: rgba(255, 255, 255, .7); white-space: nowrap; }
.credit a { color: #0078a8; font-weight: 700; }
.maplinks { background: #f2f2f2; text-align: center; padding: 17px 0 22px; display: flex; flex-direction: column; align-items: center; }
.maplinks p { line-height: 24px; }
.maplinks a { margin-top: 10px; padding: 0 16px; height: 34px; line-height: 34px; background: #14558f; color: #fff; font-size: 13px; letter-spacing: 2px; font-weight: 500; box-shadow: 0 3px 6px rgba(0, 0, 0, .3); }
.related { margin-top: 12px; }
.related li { line-height: 28px; display: flex; align-items: center; gap: 10px; }
.related li::before { content: ""; width: 6px; height: 6px; border-radius: 50%; background: #535353; }
.related .lnk { font-size: 15px; }

.footer { position: relative; background: #f2f2f2; padding: 32px 32px 39px; display: grid; grid-template-columns: 195fr 194fr 194fr 182fr; }
.bigseal { display: block; width: 81px; height: 81px; }
.icons { display: flex; gap: 8px; margin: 22px 0 19px; }
.icons a { width: 24px; height: 24px; background: #388557; color: #fff; display: flex; align-items: center; justify-content: center; }
.copy, .mark, .privacy { font-size: 11px; line-height: 16px; display: block; width: 184px; }
.copy { color: #535353; font-weight: 500; width: 160px; }
.mark { color: #858585; margin: 2px 0 3px; }
.privacy { color: #14558f; font-weight: 600; }
.footer ul { display: grid; gap: 16px; align-content: start; padding-top: 1px; }
.footer li { line-height: 24px; font-size: 15px; }
.feedback { position: absolute; right: 0; top: 130px; width: 25px; height: 109px; border: 3px solid #9cc3aa; border-right: 0; border-radius: 4px 0 0 4px; background: #fff; color: #388557; font-size: 15px; letter-spacing: 2px; display: flex; align-items: center; justify-content: center; writing-mode: sideways-lr; }
</style>
